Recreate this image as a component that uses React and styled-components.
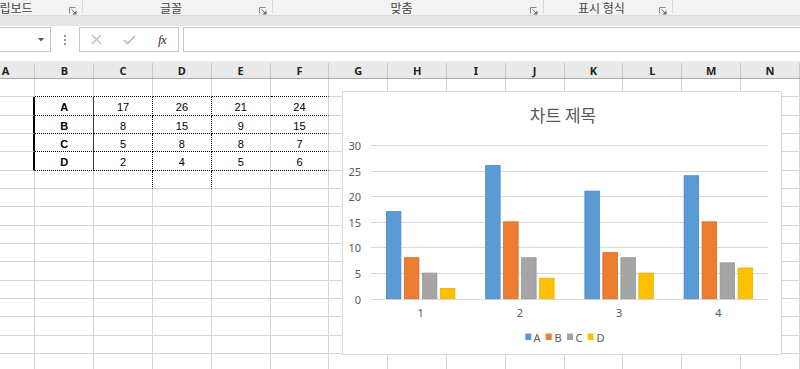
import React from 'react';
import styled, { createGlobalStyle } from 'styled-components';

const GlobalStyle = createGlobalStyle`
  * { box-sizing: border-box; }
  html, body { margin: 0; padding: 0; background: #fff; overflow: hidden; }
  body { font-family: "Liberation Sans", Arial, sans-serif; }
`;

const Page = styled.div`
  position: relative;
  width: 800px;
  height: 369px;
  overflow: hidden;
  background: #fff;
`;

/* ---------- Ribbon ---------- */
const Ribbon = styled.div`
  display: flex;
  height: 15px;
  background: #f3f3f3;
  margin-left: -48px;
`;

const Group = styled.div`
  display: flex;
  width: ${p => p.$w}px;
  flex: ${p => (p.$grow ? 1 : 'none')};
  border-right: ${p => (p.$grow ? 'none' : '1px solid #d8d8d8')};
  height: 13px;
`;

const GroupLabel = styled.div`
  flex: 1;
  text-align: center;
  font-family: "Noto Sans CJK KR", sans-serif;
  font-size: 12px;
  line-height: 15px;
  color: #444;
  white-space: nowrap;
  height: 15px;
`;

const Launcher = styled.div`
  width: 13px;
  padding-top: 7px;
  display: flex;
  justify-content: flex-start;
`;

const Strip = styled.div`
  height: 11px;
  background: #e6e6e6;
  border-top: 1px solid #dcdcdc;
`;

/* ---------- Formula bar ---------- */
const FormulaBar = styled.div`
  display: flex;
  align-items: flex-start;
  height: 35px;
  padding-top: 1px;
  background: #fff;
`;

const NameBox = styled.div`
  width: 61px;
  height: 25px;
  margin-left: -10px;
  border: 1px solid #c6c6c6;
  background: #fff;
  display: flex;
  align-items: center;
  justify-content: flex-end;
  padding-right: 6px;
`;

const Dots = styled.div`
  width: 28px;
  height: 25px;
  display: flex;
  align-items: center;
  justify-content: center;
`;

const ButtonGroup = styled.div`
  width: 100px;
  height: 25px;
  border: 1px solid #c6c6c6;
  background: #fff;
  display: flex;
`;

const FxSlot = styled.div`
  flex: 1;
  display: flex;
  align-items: center;
  justify-content: center;
`;

const FxText = styled.span`
  font-family: "Liberation Serif", "DejaVu Serif", serif;
  font-style: italic;
  font-size: 13px;
  color: #333;
  letter-spacing: -0.5px;
  padding-left: 1px;
`;

const FormulaInput = styled.div`
  flex: 1;
  height: 25px;
  margin-left: 4px;
  margin-right: -10px;
  border: 1px solid #c6c6c6;
  background: #fff;
`;

/* ---------- Sheet ---------- */
const ColumnHeader = styled.div`
  display: grid;
  grid-template-columns: repeat(15, 58.8px);
  margin-left: -23.4px;
  height: 18px;
  padding-top: 2px;
  background: #e9e9e9;
  border-bottom: 1px solid #ababab;
`;

const HeaderCell = styled.div`
  border-right: 1px solid #c8c8c8;
  text-align: center;
  font-family: "Noto Sans", "Liberation Sans", sans-serif;
  font-weight: 700;
  font-size: 11px;
  line-height: 15px;
  color: #222;
`;

const SheetGrid = styled.div`
  display: grid;
  grid-template-columns: repeat(15, 58.8px);
  grid-auto-rows: 18.33px;
  margin-left: -23.4px;
`;

const rightBorders = {
  grid: '1px solid #d4d4d4',
  thick: '2px solid #000',
  solid: '1px solid #3a3a3a',
  dotted: '1px dotted #000',
};
const bottomBorders = {
  grid: '1px solid #d4d4d4',
  dotted: '1px dotted #000',
};

const Cell = styled.div`
  border-right: ${p => rightBorders[p.$right]};
  border-bottom: ${p => bottomBorders[p.$bottom]};
  text-align: center;
  font-family: "Liberation Sans", Arial, sans-serif;
  font-size: 11px;
  font-weight: ${p => (p.$bold ? 700 : 400)};
  line-height: 18px;
  padding-top: 1px;
  color: #000;
  overflow: hidden;
`;

/* ---------- Chart ---------- */
const ChartBox = styled.div`
  position: absolute;
  left: 342px;
  top: 91px;
  width: 440px;
  height: 264px;
  background: #fff;
  border: 1px solid #d9d9d9;
  display: flex;
  flex-direction: column;
`;

const ChartTitle = styled.div`
  padding-top: 13px;
  height: 33px;
  text-align: center;
  font-family: "Noto Sans CJK KR", sans-serif;
  font-size: 17px;
  line-height: 20px;
  color: #595959;
  padding-left: 2px;
`;

const PlotSvg = styled.svg`
  display: block;
  font-family: "Noto Sans", "Open Sans", sans-serif;
  font-size: 11px;
`;

const LauncherIcon = () => (
  <svg width="8" height="8" viewBox="0 0 8 8">
    <path d="M0.5 6.5V0.5H6.5" fill="none" stroke="#8a8a8a" strokeWidth="1" />
    <path d="M2.5 2.5L6.5 6.5" stroke="#6a6a6a" strokeWidth="1" />
    <path d="M7.5 3.5V7.5H3.5Z" fill="#6a6a6a" />
  </svg>
);

const groups = [
  { label: '클립보드', w: 131 },
  { label: '글꼴', w: 190 },
  { label: '맞춤', w: 271 },
  { label: '표시 형식', w: 129 },
];

const COLS = 'ABCDEFGHIJKLMNO'.split('');
const ROWS = 16;
const table = [
  ['A', 17, 26, 21, 24],
  ['B', 8, 15, 9, 15],
  ['C', 5, 8, 8, 7],
  ['D', 2, 4, 5, 6],
];

const series = [
  { name: 'A', fill: '#5B9BD5', stroke: '#4A87C0', values: [17, 26, 21, 24] },
  { name: 'B', fill: '#ED7D31', stroke: '#D46A22', values: [8, 15, 9, 15] },
  { name: 'C', fill: '#A5A5A5', stroke: '#959595', values: [5, 8, 8, 7] },
  { name: 'D', fill: '#FFC000', stroke: '#EDB200', values: [2, 4, 5, 6] },
];

function cellProps(r, c) {
  let right = 'grid';
  let bottom = 'grid';
  if (c >= 1 && c <= 5 && r >= 0 && r <= 4) bottom = 'dotted';
  if (r >= 1 && r <= 4) {
    if (c === 0) right = 'thick';
    if (c === 1) right = 'solid';
  }
  if ((c === 2 || c === 3) && r >= 1 && r <= 5) right = 'dotted';
  let content = null;
  let bold = false;
  if (r >= 1 && r <= 4 && c >= 1 && c <= 5) {
    content = table[r - 1][c - 1];
    bold = c === 1;
  }
  return { right, bottom, content, bold };
}

function Chart() {
  const x0 = 28;
  const x1 = 425;
  const yZero = 173.7;
  const unit = 153.7 / 30;
  const catW = (x1 - x0) / 4;
  const barW = 14.5;
  const gap = 3.5;
  const groupW = barW * 4 + gap * 3;
  const ticks = [0, 5, 10, 15, 20, 25, 30];
  const legend = [
    { sq: 182.3, tx: 190.5 },
    { sq: 202.7, tx: 211.5 },
    { sq: 224, tx: 232.5 },
    { sq: 244.7, tx: 253.5 },
  ];
  return (
    <PlotSvg width="438" height="229" viewBox="0 0 438 229">
      {ticks.map(t => {
        const y = Math.round(yZero - t * unit) + 0.5;
        return (
          <g key={t}>
            <line x1={x0} x2={x1} y1={y} y2={y} stroke="#d9d9d9" strokeWidth="1" />
            <text x="18" y={y} textAnchor="end" dominantBaseline="central" fill="#595959">
              {t}
            </text>
          </g>
        );
      })}
      {[0, 1, 2, 3].map(i => {
        const cx = x0 + catW * (i + 0.5);
        return (
          <g key={i}>
            {series.map((s, j) => {
              const v = s.values[i];
              const h = v * unit;
              const bx = cx - groupW / 2 + j * (barW + gap);
              return (
                <rect
                  key={s.name}
                  x={bx}
                  y={yZero - h}
                  width={barW}
                  height={h}
                  fill={s.fill}
                  stroke={s.stroke}
                  strokeWidth="0.8"
                />
              );
            })}
            <text x={cx} y="187" textAnchor="middle" dominantBaseline="central" fill="#595959">
              {i + 1}
            </text>
          </g>
        );
      })}
      {series.map((s, j) => (
        <g key={s.name}>
          <rect x={legend[j].sq} y="208.5" width="6" height="6.5" fill={s.fill} />
          <text x={legend[j].tx} y="212" dominantBaseline="central" fill="#595959">
            {s.name}
          </text>
        </g>
      ))}
    </PlotSvg>
  );
}

export default function App() {
  const cells = [];
  for (let r = 0; r < ROWS; r++) {
    for (let c = 0; c < COLS.length; c++) {
      const p = cellProps(r, c);
      cells.push(
        <Cell key={`${r}-${c}`} $right={p.right} $bottom={p.bottom} $bold={p.bold}>
          {p.content}
        </Cell>
      );
    }
  }
  return (
    <>
      <GlobalStyle />
      <Page>
        <Ribbon>
          {groups.map(g => (
            <Group key={g.label} $w={g.w}>
              <GroupLabel>{g.label}</GroupLabel>
              <Launcher>
                <LauncherIcon />
              </Launcher>
            </Group>
          ))}
          <Group $grow />
        </Ribbon>
        <Strip />
        <FormulaBar>
          <NameBox>
            <svg width="6" height="4" viewBox="0 0 6 4">
              <path d="M0 0H6L3 3.5Z" fill="#555" />
            </svg>
          </NameBox>
          <Dots>
            <svg width="2" height="10" viewBox="0 0 2 10">
              <rect x="0" y="0" width="2" height="2" fill="#9a9a9a" />
              <rect x="0" y="4" width="2" height="2" fill="#9a9a9a" />
              <rect x="0" y="8" width="2" height="2" fill="#9a9a9a" />
            </svg>
          </Dots>
          <ButtonGroup>
            <FxSlot>
              <svg width="11" height="11" viewBox="0 0 11 11">
                <path d="M1 1L10 10M10 1L1 10" stroke="#bcbcbc" strokeWidth="1.3" />
              </svg>
            </FxSlot>
            <FxSlot>
              <svg width="13" height="10" viewBox="0 0 13 10">
                <path d="M1 5L4.5 8.5L12 1" fill="none" stroke="#bcbcbc" strokeWidth="1.6" />
              </svg>
            </FxSlot>
            <FxSlot>
              <FxText>fx</FxText>
            </FxSlot>
          </ButtonGroup>
          <FormulaInput />
        </FormulaBar>
        <ColumnHeader>
          {COLS.map(c => (
            <HeaderCell key={c}>{c}</HeaderCell>
          ))}
        </ColumnHeader>
        <SheetGrid>{cells}</SheetGrid>
        <ChartBox>
          <ChartTitle>차트 제목</ChartTitle>
          <Chart />
        </ChartBox>
      </Page>
    </>
  );
}
